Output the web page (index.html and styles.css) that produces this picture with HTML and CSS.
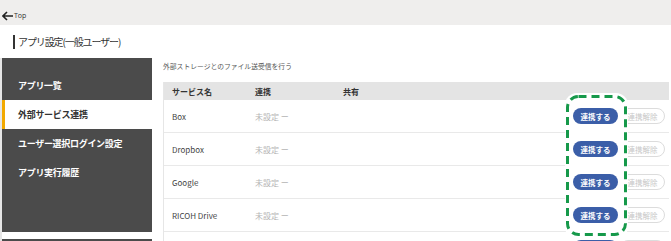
FILE: index.html
```html
<!DOCTYPE html>
<html>
<head>
<title>アプリ設定</title>
<link rel="stylesheet" href="styles.css">
</head>
<body>

<div class="topbar">
	<svg class="back" width="11" height="10" viewBox="0 0 11 10"><path d="M5 1 L1 5 L5 9 M1 5 L11 5" fill="none" stroke="#222" stroke-width="1.6"/></svg>
	<span class="top-link">Top</span>
</div>

<div class="titlebar">
	<h1 class="page-title">アプリ設定(一般ユーザー)</h1>
</div>

<div class="layout">
	<div class="side">
		<div class="sidebar">
			<div class="nav-item">アプリ一覧</div>
			<div class="nav-item active">外部サービス連携</div>
			<div class="nav-item">ユーザー選択ログイン設定</div>
			<div class="nav-item">アプリ実行履歴</div>
		</div>
		<div class="sidebar-foot"></div>
	</div>

	<div class="main">
		<p class="desc">外部ストレージとのファイル送受信を行う</p>
		<div class="table-wrap">
			<div class="row head">
				<div class="c-name">サービス名</div>
				<div class="c-link">連携</div>
				<div class="c-share">共有</div>
			</div>
			<div class="row">
				<div class="c-name">Box</div>
				<div class="c-link unset">未設定 ー</div>
				<div class="c-share"></div>
				<div class="c-btns"><span class="btn btn-on">連携する</span><span class="btn btn-off">連携解除</span></div>
			</div>
			<div class="row">
				<div class="c-name">Dropbox</div>
				<div class="c-link unset">未設定 ー</div>
				<div class="c-share"></div>
				<div class="c-btns"><span class="btn btn-on">連携する</span><span class="btn btn-off">連携解除</span></div>
			</div>
			<div class="row">
				<div class="c-name">Google</div>
				<div class="c-link unset">未設定 ー</div>
				<div class="c-share"></div>
				<div class="c-btns"><span class="btn btn-on">連携する</span><span class="btn btn-off">連携解除</span></div>
			</div>
			<div class="row">
				<div class="c-name">RICOH Drive</div>
				<div class="c-link unset">未設定 ー</div>
				<div class="c-share"></div>
				<div class="c-btns"><span class="btn btn-on">連携する</span><span class="btn btn-off">連携解除</span></div>
			</div>
			<!-- next row, only its button top shows in the frame -->
			<div class="row">
				<div class="c-share"></div>
				<div class="c-btns"><span class="btn btn-on"></span><span class="btn btn-off"></span></div>
			</div>

			<!-- highlight around the link buttons -->
			<svg class="mark" width="63" height="146" viewBox="0 0 63 146"><rect x="2.5" y="3.5" width="58" height="138" rx="11" fill="none" stroke="#16994a" stroke-width="3" stroke-dasharray="8 5"/></svg>
		</div>
	</div>
</div>

</body>
</html>
```
FILE: styles.css
```css
body {
	margin: 0;
	font-family: "Noto Sans CJK JP", "Noto Sans", sans-serif;
	color: #333;
	background: #fff;
	overflow: hidden;
}

.topbar {
	height: 25px;
	background: #efeeed;
	display: flex;
	align-items: center;
	padding: 6px 0 0 2px;
	box-sizing: border-box;
}
.back {
	display: block;
}
.top-link {
	font-family: "Open Sans", sans-serif;
	font-size: 7px;
	color: #333;
	margin-left: 1px;
}

.titlebar {
	height: 33px;
	display: flex;
	align-items: center;
	padding-left: 13px;
}
.page-title {
	margin: 0;
	font-size: 10px;
	font-weight: normal;
	letter-spacing: -1.1px;
	line-height: 14px;
	border-left: 2px solid #333;
	padding-left: 3px;
	color: #333;
}

.layout {
	display: flex;
	gap: 11px;
}
.side {
	width: 150px;
	border-left: 2px solid #e6e6e6;
}
.sidebar {
	background: #4b4b4b;
	height: 174px;
	padding-top: 13px;
	box-sizing: border-box;
}
.sidebar-foot {
	background: #4b4b4b;
	height: 20px;
	margin-top: 7px;
}
.nav-item {
	height: 29px;
	display: flex;
	align-items: center;
	padding-left: 16px;
	color: #fff;
	font-size: 9px;
	font-weight: bold;
	letter-spacing: -0.3px;
}
.nav-item.active {
	background: #fff;
	color: #333;
	border-left: 3px solid #f2a900;
	padding-left: 13px;
}

.main {
	width: 506px;
}
.desc {
	margin: 2px 0 0;
	height: 22px;
	font-size: 6.8px;
	color: #555;
	line-height: 12px;
}

.table-wrap {
	position: relative;
	border-left: 1px solid #e6e6e6;
}
.row {
	display: flex;
	align-items: center;
	height: 33px;
	border-bottom: 1px solid #e9e9e9;
	box-sizing: border-box;
	font-size: 8px;
	color: #444;
}
.row.head {
	height: 18px;
	background: #e4e4e4;
	border-bottom: 0;
	font-weight: bold;
	color: #333;
}
.c-name {
	width: 91px;
	padding-left: 8px;
	box-sizing: border-box;
}
.c-link {
	width: 88px;
}
.c-share {
	flex: 1;
}
.unset {
	color: #b5b5b5;
}
.c-btns {
	display: flex;
	gap: 2px;
	padding-right: 4px;
}
.btn {
	width: 45px;
	height: 16px;
	border-radius: 8px;
	box-sizing: border-box;
	display: flex;
	align-items: center;
	justify-content: center;
	font-size: 7.5px;
	font-weight: bold;
}
.btn-on {
	background: #3b5ea8;
	color: #fff;
	position: relative;
	z-index: 2;
}
.btn-off {
	border: 1px solid #dcdcdc;
	color: #c8c8c8;
	font-weight: normal;
}

.mark {
	position: absolute;
	left: 401px;
	top: 11px;
	z-index: 1;
	background: #fff;
	border-radius: 12px;
}
```
